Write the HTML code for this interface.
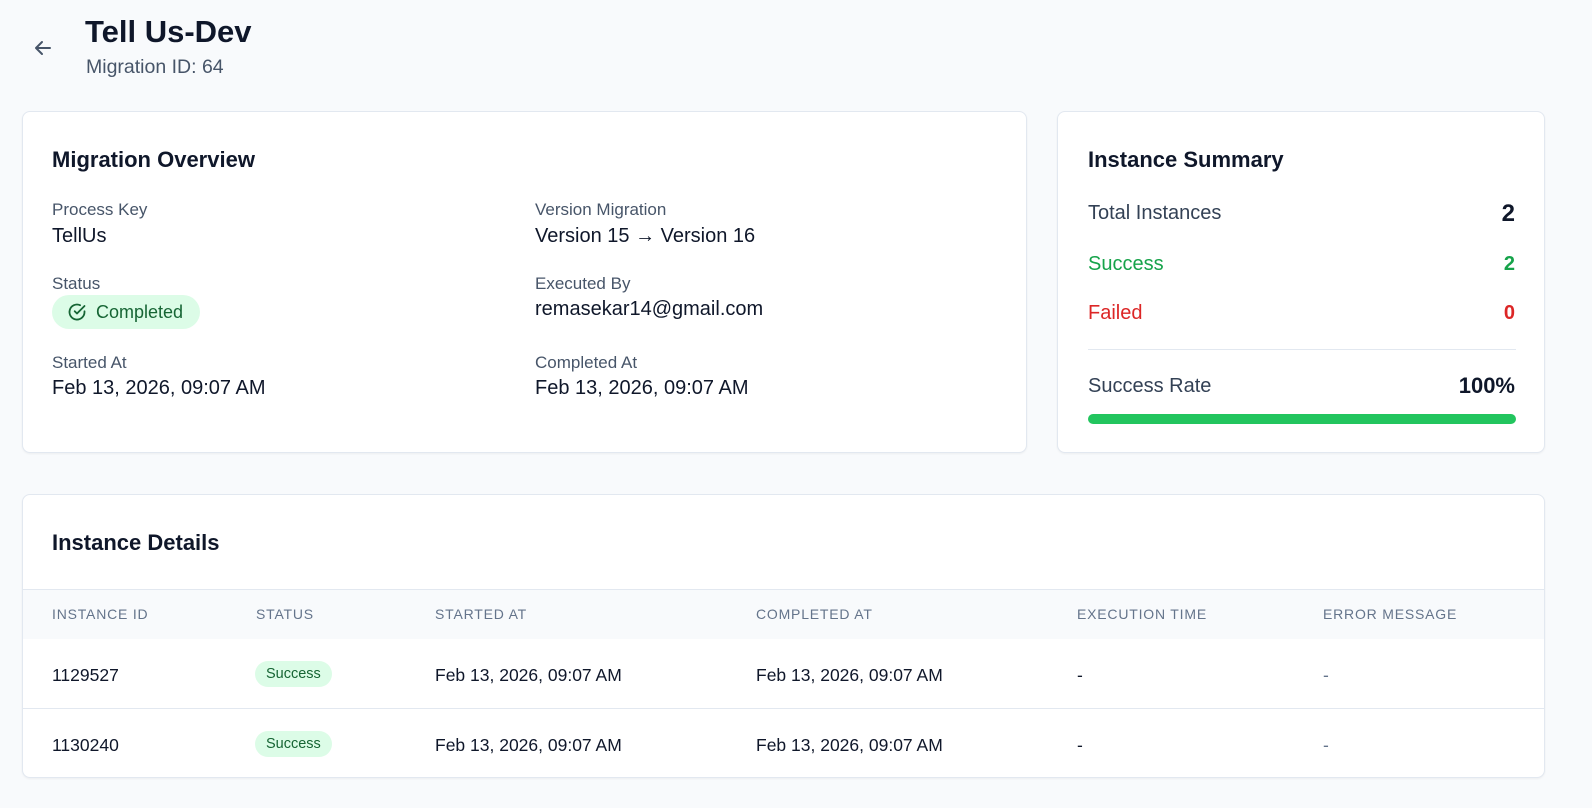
<!DOCTYPE html>
<html><head><style>
*{margin:0;padding:0;box-sizing:border-box}
body{width:1592px;height:808px;background:#f8fafc;font-family:"Liberation Sans",sans-serif;color:#0f172a;position:relative;overflow:hidden}
.a{position:absolute;white-space:nowrap}
.card{position:absolute;background:#fff;border:1px solid #e2e8f0;border-radius:8px;box-shadow:0 1px 2px rgba(0,0,0,.05)}
.lbl{font-size:17px;color:#475569}
.val{font-size:20px;color:#0f172a}
.h2{font-size:22px;font-weight:bold}
.th{font-size:14px;color:#64748b;letter-spacing:.8px}
.td{font-size:17.5px}
.pill{position:absolute;background:#dcfce7;color:#166534;border-radius:14px;font-size:14.5px;padding:5px 11px}
</style></head><body>
<svg class="a" style="left:33px;top:38px" width="20" height="20" viewBox="0 0 20 20"><path d="M17 10H3M9 4L3 10l6 6" stroke="#475569" stroke-width="2" fill="none" stroke-linecap="round" stroke-linejoin="round"/></svg>
<div class="a" style="left:85px;top:14px;font-size:31px;font-weight:bold">Tell Us-Dev</div>
<div class="a" style="left:86px;top:56px;font-size:19.5px;color:#475569">Migration ID: 64</div>

<div class="card" style="left:22px;top:111px;width:1005px;height:342px">
<div class="a h2" style="left:29px;top:35px">Migration Overview</div>
<div class="a lbl" style="left:29px;top:88px">Process Key</div>
<div class="a val" style="left:29px;top:113px">TellUs</div>
<div class="a lbl" style="left:29px;top:162px">Status</div>
<div class="a" style="left:29px;top:183px;width:148px;height:34px;background:#dcfce7;border-radius:17px;color:#166534;font-size:18px;padding:7px 0 0 44px">Completed</div>
<svg class="a" style="left:44px;top:190px" width="20" height="20" viewBox="0 0 20 20"><path d="M17.5 9.3V10a7.5 7.5 0 1 1-4.4-6.8" stroke="#166534" stroke-width="1.8" fill="none" stroke-linecap="round"/><path d="M17.5 4L10 11.5 7.7 9.2" stroke="#166534" stroke-width="1.8" fill="none" stroke-linecap="round" stroke-linejoin="round"/></svg>
<div class="a lbl" style="left:29px;top:241px">Started At</div>
<div class="a val" style="left:29px;top:265px">Feb 13, 2026, 09:07 AM</div>
<div class="a lbl" style="left:512px;top:88px">Version Migration</div>
<div class="a val" style="left:512px;top:113px">Version 15 → Version 16</div>
<div class="a lbl" style="left:512px;top:162px">Executed By</div>
<div class="a val" style="left:512px;top:186px">remasekar14@gmail.com</div>
<div class="a lbl" style="left:512px;top:241px">Completed At</div>
<div class="a val" style="left:512px;top:265px">Feb 13, 2026, 09:07 AM</div>
</div>

<div class="card" style="left:1057px;top:111px;width:488px;height:342px">
<div class="a h2" style="left:30px;top:35px">Instance Summary</div>
<div class="a" style="left:30px;top:90px;font-size:20px;color:#334155">Total Instances</div>
<div class="a" style="right:29px;top:88px;font-size:24px;font-weight:bold">2</div>
<div class="a" style="left:30px;top:141px;font-size:20px;color:#16a34a">Success</div>
<div class="a" style="right:29px;top:141px;font-size:20px;font-weight:bold;color:#16a34a">2</div>
<div class="a" style="left:30px;top:190px;font-size:20px;color:#dc2626">Failed</div>
<div class="a" style="right:29px;top:190px;font-size:20px;font-weight:bold;color:#dc2626">0</div>
<div class="a" style="left:30px;top:237px;width:428px;height:1px;background:#e2e8f0"></div>
<div class="a" style="left:30px;top:263px;font-size:20px;color:#334155">Success Rate</div>
<div class="a" style="right:29px;top:261px;font-size:22px;font-weight:bold">100%</div>
<div class="a" style="left:30px;top:302px;width:428px;height:10px;background:#22c55e;border-radius:5px"></div>
</div>

<div class="card" style="left:22px;top:494px;width:1523px;height:284px;overflow:hidden">
<div class="a h2" style="left:29px;top:35px">Instance Details</div>
<div class="a" style="left:0;top:94px;width:1523px;height:50px;background:#f8fafc;border-top:1px solid #e2e8f0"></div>
<div class="a th" style="left:29px;top:111px">INSTANCE ID</div>
<div class="a th" style="left:233px;top:111px">STATUS</div>
<div class="a th" style="left:412px;top:111px">STARTED AT</div>
<div class="a th" style="left:733px;top:111px">COMPLETED AT</div>
<div class="a th" style="left:1054px;top:111px">EXECUTION TIME</div>
<div class="a th" style="left:1300px;top:111px">ERROR MESSAGE</div>
<div class="a td" style="left:29px;top:170px">1129527</div>
<div class="pill" style="left:232px;top:166px">Success</div>
<div class="a td" style="left:412px;top:170px">Feb 13, 2026, 09:07 AM</div>
<div class="a td" style="left:733px;top:170px">Feb 13, 2026, 09:07 AM</div>
<div class="a td" style="left:1054px;top:170px">-</div>
<div class="a td" style="left:1300px;top:170px;color:#64748b">-</div>
<div class="a" style="left:0;top:213px;width:1523px;height:1px;background:#e2e8f0"></div>
<div class="a td" style="left:29px;top:240px">1130240</div>
<div class="pill" style="left:232px;top:236px">Success</div>
<div class="a td" style="left:412px;top:240px">Feb 13, 2026, 09:07 AM</div>
<div class="a td" style="left:733px;top:240px">Feb 13, 2026, 09:07 AM</div>
<div class="a td" style="left:1054px;top:240px">-</div>
<div class="a td" style="left:1300px;top:240px;color:#64748b">-</div>
</div>
</body></html>
